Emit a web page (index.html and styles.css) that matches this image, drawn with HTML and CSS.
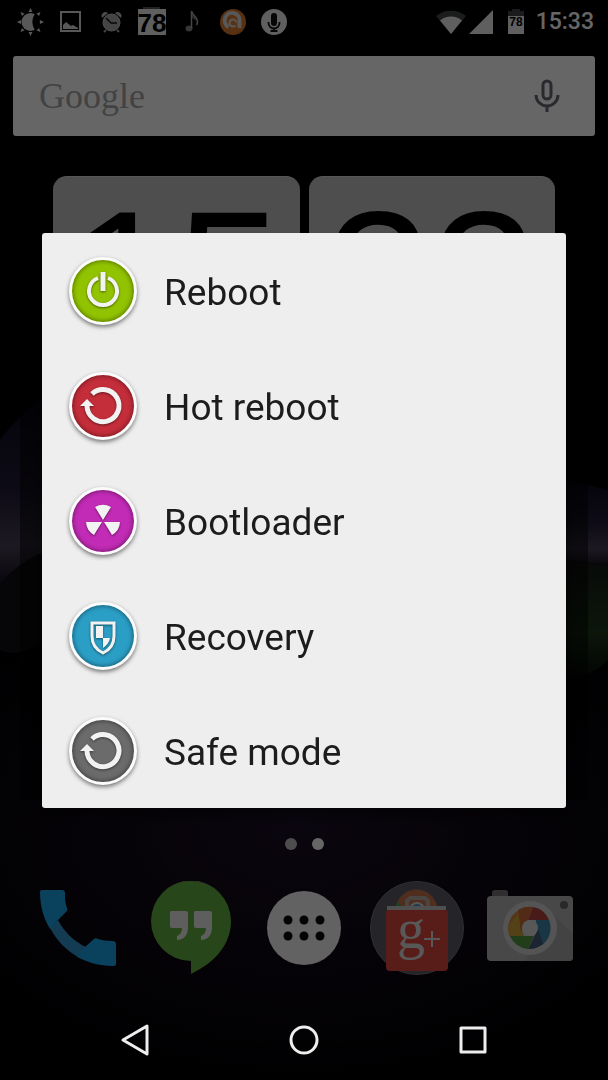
FILE: index.html
```
<!DOCTYPE html>
<html lang="en">
<head>
  <meta charset="UTF-8">
  <meta name="viewport" content="width=device-width, initial-scale=1">
  <title>Reboot menu</title>
  <link rel="stylesheet" href="styles.css">
</head>
<body>
  <div class="screen">
    <!-- WALLPAPER -->
    <svg class="wallpaper" viewBox="0 0 608 1080" preserveAspectRatio="none" aria-hidden="true">
      <defs>
        <linearGradient id="violet" x1="0" y1="0" x2="0" y2="1">
          <stop offset="0" stop-color="#0c0918"/>
          <stop offset=".5" stop-color="#221c38"/>
          <stop offset=".8" stop-color="#484054"/>
          <stop offset="1" stop-color="#16101e"/>
        </linearGradient>
        <linearGradient id="green" x1="0" y1="0" x2="0" y2="1">
          <stop offset="0" stop-color="#141a18"/>
          <stop offset=".6" stop-color="#20381c"/>
          <stop offset="1" stop-color="#060a06"/>
        </linearGradient>
        <radialGradient id="glow" cx=".5" cy=".5" r=".5">
          <stop offset="0" stop-color="#1c1026"/>
          <stop offset="1" stop-color="#1c1026" stop-opacity="0"/>
        </radialGradient>
      </defs>
      <ellipse cx="300" cy="820" rx="420" ry="280" fill="url(#glow)"/>
      <path d="M0 440Q16 418 44 396V556Q18 564 0 584Z" fill="url(#violet)"/>
      <path d="M608 490Q588 484 560 480V560Q590 562 608 566Z" fill="url(#violet)"/>
      <path d="M608 566Q586 562 560 560V680Q588 680 608 660Z" fill="url(#green)"/>
      <path d="M0 584Q18 562 44 552V640Q20 660 0 650Z" fill="#101016"/>
      <path d="M20 230H588V800H20Z" fill="#000" opacity=".5"/>
    </svg>

    <!-- STATUS BAR -->
    <header class="status-bar">
      <div class="status-icons">
        <svg viewBox="0 0 30 30" aria-hidden="true">
          <circle cx="16.500" cy="15" r="9" fill="#ddd"/>
          <path d="M21 6.500a16 16 0 0 0 0 17a10 10 0 0 0 0-17z" fill="#000"/>
          <path d="M16.500 1l-2 4h4zM16.500 29l-2-4h4zM3 15l4-2v4zM30 15l-4-2v4zM6.500 5l1.500 4 2.500-2.500zM6.500 25l1.500-4 2.500 2.500zM26.500 5l-1.500 4-2.500-2.500zM26.500 25l-1.500-4-2.500 2.500z" fill="#ddd"/>
        </svg>
        <svg viewBox="0 0 30 30" aria-hidden="true">
          <rect x="6" y="5" width="19" height="19" fill="none" stroke="#ddd" stroke-width="2"/>
          <path d="M8 22v-4l3-3 5 4 2-1 5 3v1z" fill="#ddd"/>
        </svg>
        <svg viewBox="0 0 30 30" aria-hidden="true">
          <circle cx="15.500" cy="15.500" r="8.500" fill="#aaa" stroke="#ccc"/>
          <path d="M6 11a4 4 0 0 1 6-5zM25 11a4 4 0 0 0-6-5z" fill="#bbb"/>
          <path d="M10 23l-2 2M21 23l2 2" stroke="#aaa" stroke-width="2"/>
          <path d="M10 11l5 5h6" fill="none" stroke="#111" stroke-width="1.500"/>
        </svg>
        <svg viewBox="0 0 30 30" aria-hidden="true">
          <path d="M6 0h17v3H6z" fill="#555"/>
          <path d="M1 2h28v26H1z" fill="#eee"/>
          <text class="battery-text" x="15" y="24.500">78</text>
        </svg>
        <svg viewBox="0 0 30 30" aria-hidden="true">
          <ellipse cx="11" cy="21.500" rx="3.500" ry="3" fill="#888"/>
          <path d="M13.500 21V4c1 5 6 6 6 10q0 3-1 4" fill="none" stroke="#aaa" stroke-width="1.500"/>
          <path d="M14 6c1 4 5 6 5 10-1-3-3-4-5-5z" fill="#777"/>
        </svg>
        <svg viewBox="0 0 30 30" aria-hidden="true">
          <circle cx="14" cy="15" r="13" fill="#dc7b2e"/>
          <path d="M9.500 20A7.500 7.500 0 1 1 20.500 15V21" fill="none" stroke="#ddd" stroke-width="4"/>
          <path d="M16.500 18.500a3.500 3.500 0 1 1 1-3" fill="none" stroke="#ddd" stroke-width="2"/>
        </svg>
        <svg viewBox="0 0 30 30" aria-hidden="true">
          <circle cx="14" cy="15" r="13" fill="#eee"/>
          <rect x="11" y="6" width="6" height="13" rx="3" fill="#111"/>
          <path d="M8.500 15v1a5.500 5.500 0 0 0 11 0v-1M14 21v3M10.500 24h7" fill="none" stroke="#111" stroke-width="1.800"/>
        </svg>
      </div>
      <div class="status-right">
        <svg class="signal" viewBox="0 0 58 26" aria-hidden="true">
          <path d="M0 7a24 24 0 0 1 30 0L15 25z" fill="#444a48"/>
          <path d="M4 11.500a17 17 0 0 1 22 0L15 25z" fill="#eee"/>
          <path d="M57 1v24H33z" fill="#eee"/>
        </svg>
        <svg class="battery" viewBox="0 0 16 26" aria-hidden="true">
          <path d="M4 0h8v2h4v5H0V2h4z" fill="#44444c"/>
          <path d="M0 7h16v18H0z" fill="#eee"/>
          <text class="battery-small" x="8" y="17">78</text>
        </svg>
        <time class="time">15:33</time>
      </div>
    </header>

    <!-- SEARCH -->
    <div class="search">
      <span class="logo">Google</span>
      <button class="mic" type="button" aria-label="Voice search">
        <svg viewBox="0 0 26 34" aria-hidden="true">
          <rect x="9" y="2" width="8" height="18" rx="4"/>
          <path d="M2 16a11 11 0 0 0 22 0M13 27v6"/>
        </svg>
      </button>
    </div>

    <!-- FLIP CLOCK -->
    <div class="clock">
      <div class="flip">15</div>
      <div class="flip">33</div>
    </div>

    <!-- PAGES AND DOCK -->
    <div class="pages">
      <span class="page"></span>
      <span class="page current"></span>
    </div>
    <nav class="dock" aria-label="Favorites">
      <button type="button" aria-label="Phone">
        <svg viewBox="0 0 94 94" aria-hidden="true">
          <path d="M27 39C33 51 44 61 55 66L47 76C36 70 26 60 19 47z" fill="#3093cc"/>
          <path d="M9 11q0-2 2-2h20q3 0 3 3c0 6 0 9 2 15 1 2 0 3-1 4L27 39l-8 9C12 36 9 24 9 11z" fill="#1ba3e8"/>
          <path d="M54 66l9-8c1-1 3-1 4 0 4 1 8 2 14 2q4 0 4 3v20q0 2-3 2C68 85 56 81 46 76z" fill="#1ba3e8"/>
        </svg>
      </button>
      <button type="button" aria-label="Hangouts">
        <svg viewBox="0 0 94 94" aria-hidden="true">
          <path d="M47 0a40 40 0 0 1 40 40c0 24-17 42-40 53V80a40 40 0 0 1 0-80z" fill="#62af41"/>
          <path d="M14 17a40 40 0 0 1 66 0A41 41 0 0 0 14 17z" fill="#8b9c68"/>
          <path d="M27 30h15q2 0 2 2v14c0 8-4 13-11 13v-4c3-1 5-4 5-8H28q-2 0-2-2V32q0-2 1-2zM51 30h15q2 0 2 2v14c0 8-4 13-11 13v-4c3-1 5-4 5-8H52q-2 0-2-2V32q0-2 1-2z" fill="#ececec"/>
        </svg>
      </button>
      <button type="button" aria-label="All apps">
        <svg viewBox="0 0 94 94" aria-hidden="true">
          <circle cx="47" cy="47" r="37" fill="#f5f5f5"/>
          <g fill="#080808">
            <circle cx="31" cy="39" r="4.500"/><circle cx="47" cy="39" r="4.500"/><circle cx="63" cy="39" r="4.500"/>
            <circle cx="31" cy="55" r="4.500"/><circle cx="47" cy="55" r="4.500"/><circle cx="63" cy="55" r="4.500"/>
          </g>
        </svg>
      </button>
      <button type="button" aria-label="Google folder">
        <svg viewBox="0 0 94 94" aria-hidden="true">
          <circle cx="47" cy="47" r="46.500" fill="#5c5c66" stroke="#74747c"/>
          <path d="M26 25a21 21 0 0 1 41 0z" fill="#c9744a"/>
          <path d="M25 25l4-4 2 4z" fill="#3fa65a"/>
          <circle cx="47" cy="29" r="7" fill="#4a8fc4" stroke="#ddd" stroke-width="2"/>
          <path d="M37 26v-6l3-3h15l3 3v6" fill="none" stroke="#b8aaa8" stroke-width="4"/>
          <path d="M17 25h59v5H17z" fill="#c6c6c6"/>
          <path d="M16 31q0-2 2-2h57q3 0 3 3v54q0 4-4 4H20q-4 0-4-4z" fill="#db4a3f"/>
          <text class="gplus" x="27" y="67">g</text>
          <path d="M54 58h16M62 50v16" stroke="#ddd" stroke-width="2"/>
        </svg>
      </button>
      <button type="button" aria-label="Camera">
        <svg viewBox="0 0 94 94" aria-hidden="true">
          <path d="M9 15V12q0-3 3-3h10q3 0 3 3v3z" fill="#777"/>
          <rect x="4" y="15" width="86" height="65" rx="4" fill="#b5b5b5"/>
          <path d="M66 30l24 22v24q0 4-4 4H42z" fill="#a9a9a9"/>
          <circle cx="81" cy="24" r="4" fill="#66666c"/>
          <circle cx="47" cy="47" r="27" fill="#d2d2d2"/>
          <g>
            <path d="M36 29A21 21 0 0 1 47 26L36 56H27A21 21 0 0 1 36 29z" fill="#d28a3e"/>
            <path d="M26 44A21 21 0 0 0 27 56H41L36 33z" fill="#cfa53e"/>
            <path d="M35 29A21 21 0 0 1 50 26L45 39 38 51z" fill="#cd6c38"/>
            <path d="M50 26A21 21 0 0 1 66 39H45z" fill="#b5443c"/>
            <path d="M66 39A21 21 0 0 1 59 64L53 51V39z" fill="#4087ad"/>
            <path d="M60 63A21 21 0 0 1 45 68L55 48z" fill="#46597a"/>
            <path d="M45 68A21 21 0 0 1 27 55H51z" fill="#549943"/>
          </g>
          <circle cx="47" cy="47" r="8" fill="#dcdcdc"/>
        </svg>
      </button>
    </nav>
  </div>

  <!-- POWER DIALOG -->
  <div class="scrim">
    <div class="dialog" role="dialog" aria-label="Reboot menu">
      <button class="option" type="button">
        <span class="badge reboot">
          <svg viewBox="0 0 62 62" aria-hidden="true">
            <path d="M26 18a14 14 0 1 0 10 0" fill="none" stroke-width="4"/>
            <path d="M31 12v19" fill="none" stroke-width="5"/>
          </svg>
        </span>
        <span class="label">Reboot</span>
      </button>
      <button class="option" type="button">
        <span class="badge hot">
          <svg viewBox="0 0 62 62" aria-hidden="true">
            <path d="M20 19A16 16 0 1 1 15 31" fill="none" stroke-width="5"/>
            <path d="M8 31l7-7 7 7z" stroke="none"/>
          </svg>
        </span>
        <span class="label">Hot reboot</span>
      </button>
      <button class="option" type="button">
        <span class="badge bootloader">
          <svg viewBox="0 0 62 62" aria-hidden="true">
            <path d="M31 30l-8-13a17 17 0 0 1 16 0zM30 32l-8 13A16 16 0 0 1 14 32zM32 32l8 13A16 16 0 0 0 48 32z" stroke="none"/>
          </svg>
        </span>
        <span class="label">Bootloader</span>
      </button>
      <button class="option" type="button">
        <span class="badge recovery">
          <svg viewBox="0 0 62 62" aria-hidden="true">
            <path d="M20 18H42V31Q42 43 31 48 20 43 20 31z" fill="none" stroke-width="3"/>
            <path d="M24 21h7v12h-7zM31 33h7q-1 6-7 10z" stroke="none"/>
          </svg>
        </span>
        <span class="label">Recovery</span>
      </button>
      <button class="option" type="button">
        <span class="badge safe">
          <svg viewBox="0 0 62 62" aria-hidden="true">
            <path d="M20 19A16 16 0 1 1 15 31" fill="none" stroke-width="5"/>
            <path d="M8 31l7-7 7 7z" stroke="none"/>
          </svg>
        </span>
        <span class="label">Safe mode</span>
      </button>
    </div>
  </div>

  <!-- SYSTEM KEYS -->
  <nav class="keys" aria-label="System">
    <button type="button" aria-label="Back">
      <svg viewBox="0 0 36 36"><path d="M30 4v28L6 18z"/></svg>
    </button>
    <button type="button" aria-label="Home">
      <svg viewBox="0 0 36 36"><circle cx="18" cy="18" r="13"/></svg>
    </button>
    <button type="button" aria-label="Recent apps">
      <svg viewBox="0 0 36 36"><rect x="6" y="6" width="24" height="24"/></svg>
    </button>
  </nav>
</body>
</html>
```

FILE: styles.css
```
* {
  margin: 0;
  padding: 0;
  box-sizing: border-box;
}
body {
  background: #000;
  font-family: Roboto, "Liberation Sans", sans-serif;
}
button {
  border: 0;
  background: none;
  font: inherit;
  cursor: pointer;
}
svg {
  display: block;
}

/* HOME SCREEN */
.screen {
  position: relative;
  display: flex;
  flex-direction: column;
  min-height: 100vh;
  padding-bottom: 105px;
}
.wallpaper {
  position: absolute;
  top: 0;
  left: 0;
  width: 100%;
  height: 100%;
  z-index: -1;
}

/* STATUS BAR */
.status-bar {
  display: flex;
  justify-content: space-between;
  align-items: center;
  height: 43px;
  padding: 0 14px;
}
.status-icons {
  display: flex;
  gap: 11px;
}
.status-icons svg {
  width: 30px;
  height: 30px;
}
.status-right {
  display: flex;
  align-items: center;
}
.signal {
  width: 58px;
  height: 26px;
}
.battery {
  width: 16px;
  height: 26px;
  margin: 0 12px 0 14px;
}
.battery-text {
  font: bold 26px "Liberation Sans", sans-serif;
  text-anchor: middle;
}
.battery-small {
  font: bold 12px "Liberation Sans", sans-serif;
  text-anchor: middle;
}
.time {
  color: #fff;
  font-size: 23px;
  font-weight: 500;
  line-height: 28px;
}

/* SEARCH */
.search {
  display: flex;
  justify-content: space-between;
  align-items: center;
  height: 80px;
  margin: 13px 13px 0;
  padding: 0 35px 0 26px;
  background: #fff;
  border-radius: 3px;
}
.logo {
  color: #a6a6a6;
  font: 36px/40px "Liberation Serif", serif;
}
.mic svg {
  width: 26px;
  height: 34px;
  fill: none;
  stroke: #6a6a74;
  stroke-width: 3;
}

/* FLIP CLOCK */
.clock {
  display: flex;
  gap: 9px;
  margin: 40px 53px auto;
}
.flip {
  flex: 1;
  padding-bottom: 20px;
  background: #c4c4c4;
  border-top: 1px solid #d8d8d8;
  border-radius: 14px;
  color: #000;
  font: 190px/200px "Liberation Sans", sans-serif;
  text-align: center;
}

/* PAGES AND DOCK */
.pages {
  display: flex;
  justify-content: center;
  gap: 15px;
  margin-bottom: 31px;
}
.page {
  width: 12px;
  height: 12px;
  border-radius: 50%;
  background: #c4c0c0;
}
.page.current {
  background: #fff;
}
.dock {
  display: grid;
  grid-template-columns: repeat(5, 1fr);
  justify-items: center;
  padding: 0 21px;
}
.dock svg {
  width: 94px;
  height: 94px;
}
.gplus {
  fill: #ddd;
  font: 56px "Liberation Serif", serif;
}

/* POWER DIALOG */
.scrim {
  position: fixed;
  inset: 0;
  display: flex;
  align-items: center;
  justify-content: center;
  padding: 0 42px 39px;
  background: rgba(0, 0, 0, 0.6);
}
.dialog {
  width: 100%;
  background: #eee;
  border-radius: 3px;
  box-shadow: 0 8px 12px rgba(0, 0, 0, 0.5);
}
.option {
  display: flex;
  align-items: center;
  gap: 27px;
  width: 100%;
  height: 115px;
  padding: 0 27px;
  color: #1c1c1c;
  font-size: 37px;
  line-height: 44px;
  text-align: left;
}
.label {
  padding-top: 4px;
}
.badge {
  width: 68px;
  height: 68px;
  border: 3px solid #fbfbfb;
  border-radius: 50%;
  box-shadow: 0 2px 4px rgba(0, 0, 0, 0.5), inset 0 0 4px 1px rgba(0, 0, 0, 0.4);
}
.badge svg {
  width: 62px;
  height: 62px;
  fill: #f2f2f2;
  stroke: #f2f2f2;
  filter: drop-shadow(0 1px 1px rgba(0, 0, 0, 0.5));
}
.reboot { background: #91c300; }
.hot { background: #c42d3a; }
.bootloader { background: #c22bb5; }
.recovery { background: #2b9ec5; }
.safe { background: #6b6b6b; }

/* SYSTEM KEYS */
.keys {
  position: fixed;
  left: 0;
  right: 0;
  bottom: 0;
  display: grid;
  grid-template-columns: repeat(3, 1fr);
  justify-items: center;
  align-items: center;
  height: 80px;
  padding: 0 50px;
}
.keys svg {
  width: 36px;
  height: 36px;
  fill: none;
  stroke: #eee;
  stroke-width: 3;
  stroke-linejoin: round;
}
```
